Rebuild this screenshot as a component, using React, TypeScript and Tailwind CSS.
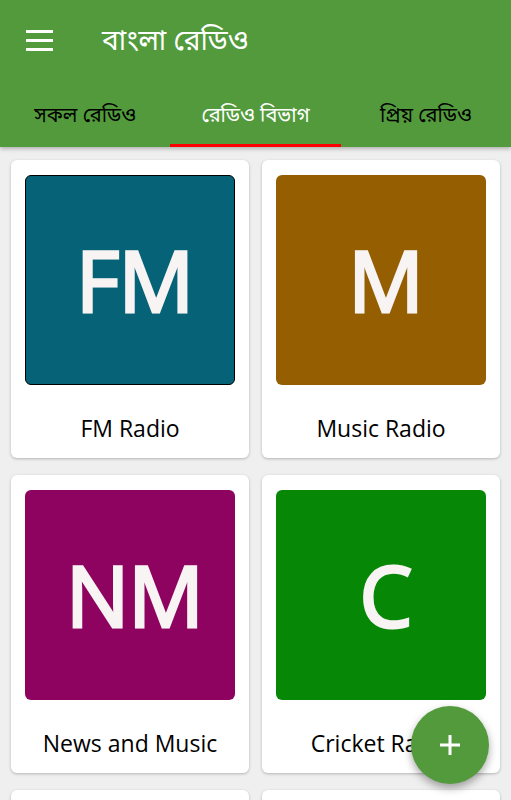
import React from "react";

const items = [
  { code: "FM", name: "FM Radio", bg: "bg-[#066377]", border: true },
  { code: "M", name: "Music Radio", bg: "bg-[#955e00]", border: false },
  { code: "NM", name: "News and Music", bg: "bg-[#8f0360]", border: false },
  { code: "C", name: "Cricket Radio", bg: "bg-[#068706]", border: false },
];

const bn = { fontFamily: '"Noto Sans", "Noto Sans Bengali", "Lohit Bengali", sans-serif' };
const latin = { fontFamily: '"Open Sans", "Noto Sans", sans-serif' };

const App = () => {
  return (
    <div className="relative w-[511px] h-[800px] overflow-hidden bg-[#efefef]">
      <header className="relative z-10 bg-[#529a3c] shadow-[0_2px_4px_rgba(0,0,0,0.25)]">
        <div className="flex items-center h-[80px]">
          <div className="ml-[26px] w-[27px] flex flex-col gap-[6px]">
            <span className="block h-[3px] bg-white" />
            <span className="block h-[3px] bg-white" />
            <span className="block h-[3px] bg-white" />
          </div>
          <h1 className="ml-[49px] text-white text-[28px] leading-none pb-[2px]" style={bn}>
            বাংলা রেডিও
          </h1>
        </div>
        <nav className="grid grid-cols-3 h-[67px]" style={bn}>
          <div className="flex items-center justify-center pt-[2px] text-[20px] text-black">সকল রেডিও</div>
          <div className="relative flex items-center justify-center pt-[2px] text-[20px] text-white">
            রেডিও বিভাগ
            <span className="absolute left-0 right-0 bottom-0 h-[3px] bg-[#ff0000]" />
          </div>
          <div className="flex items-center justify-center pt-[2px] text-[20px] text-black">প্রিয় রেডিও</div>
        </nav>
      </header>

      <main className="grid grid-cols-2 gap-x-[13px] gap-y-[17px] px-[11px] pt-[13px]">
        {items.map((it) => (
          <div
            key={it.code}
            className="bg-white rounded-[6px] shadow-[0_1px_3px_rgba(0,0,0,0.25)] h-[298px] px-[14px] pt-[15px] flex flex-col"
          >
            <div
              className={`${it.bg} h-[210px] rounded-[6px] flex items-center justify-center pl-[9px] ${
                it.border ? "border border-black" : ""
              }`}
            >
              <span
                className="text-[#f8f4f4] text-[84px] leading-none tracking-[-1px] [-webkit-text-stroke:3px_#f8f4f4]"
                style={latin}
              >
                {it.code}
              </span>
            </div>
            <div className="flex-1 flex items-center justify-center pt-[14px]">
              <span className="text-[23px] text-black leading-none" style={latin}>
                {it.name}
              </span>
            </div>
          </div>
        ))}
        <div className="bg-white rounded-[6px] shadow-[0_1px_3px_rgba(0,0,0,0.25)] h-[298px]" />
        <div className="bg-white rounded-[6px] shadow-[0_1px_3px_rgba(0,0,0,0.25)] h-[298px]" />
      </main>

      <button className="absolute left-[411px] top-[706px] w-[78px] h-[78px] rounded-full bg-[#529a3c] shadow-[0_4px_8px_rgba(0,0,0,0.35)] flex items-center justify-center">
        <svg width="22" height="22" viewBox="0 0 22 22">
          <path d="M11 1v20M1 11h20" stroke="white" strokeWidth="3" />
        </svg>
      </button>
    </div>
  );
};

export default App;
